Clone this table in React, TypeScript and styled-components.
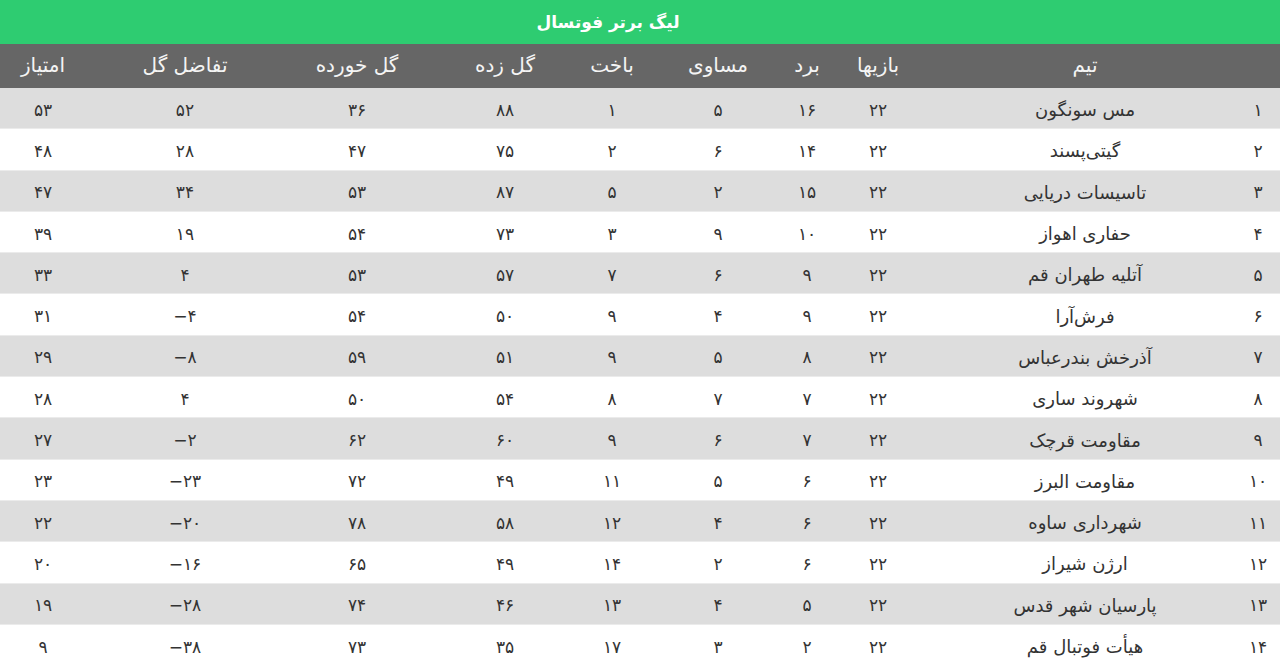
import React from 'react';
import styled, { createGlobalStyle } from 'styled-components';

type Team = {
    rank: number,
    name: string,
    played: number,
    won: number,
    drawn: number,
    lost: number,
    goalsFor: number,
    goalsAgainst: number,
    diff: number,
    points: number
}

const teams: Team[] = [
    { rank: 1, name: 'مس سونگون', played: 22, won: 16, drawn: 5, lost: 1, goalsFor: 88, goalsAgainst: 36, diff: 52, points: 53 },
    { rank: 2, name: 'گیتی‌پسند', played: 22, won: 14, drawn: 6, lost: 2, goalsFor: 75, goalsAgainst: 47, diff: 28, points: 48 },
    { rank: 3, name: 'تاسیسات دریایی', played: 22, won: 15, drawn: 2, lost: 5, goalsFor: 87, goalsAgainst: 53, diff: 34, points: 47 },
    { rank: 4, name: 'حفاری اهواز', played: 22, won: 10, drawn: 9, lost: 3, goalsFor: 73, goalsAgainst: 54, diff: 19, points: 39 },
    { rank: 5, name: 'آتلیه طهران قم', played: 22, won: 9, drawn: 6, lost: 7, goalsFor: 57, goalsAgainst: 53, diff: 4, points: 33 },
    { rank: 6, name: 'فرش‌آرا', played: 22, won: 9, drawn: 4, lost: 9, goalsFor: 50, goalsAgainst: 54, diff: -4, points: 31 },
    { rank: 7, name: 'آذرخش بندرعباس', played: 22, won: 8, drawn: 5, lost: 9, goalsFor: 51, goalsAgainst: 59, diff: -8, points: 29 },
    { rank: 8, name: 'شهروند ساری', played: 22, won: 7, drawn: 7, lost: 8, goalsFor: 54, goalsAgainst: 50, diff: 4, points: 28 },
    { rank: 9, name: 'مقاومت قرچک', played: 22, won: 7, drawn: 6, lost: 9, goalsFor: 60, goalsAgainst: 62, diff: -2, points: 27 },
    { rank: 10, name: 'مقاومت البرز', played: 22, won: 6, drawn: 5, lost: 11, goalsFor: 49, goalsAgainst: 72, diff: -23, points: 23 },
    { rank: 11, name: 'شهرداری ساوه', played: 22, won: 6, drawn: 4, lost: 12, goalsFor: 58, goalsAgainst: 78, diff: -20, points: 22 },
    { rank: 12, name: 'ارژن شیراز', played: 22, won: 6, drawn: 2, lost: 14, goalsFor: 49, goalsAgainst: 65, diff: -16, points: 20 },
    { rank: 13, name: 'پارسیان شهر قدس', played: 22, won: 5, drawn: 4, lost: 13, goalsFor: 46, goalsAgainst: 74, diff: -28, points: 19 },
    { rank: 14, name: 'هیأت فوتبال قم', played: 22, won: 2, drawn: 3, lost: 17, goalsFor: 35, goalsAgainst: 73, diff: -38, points: 9 }
];

const headings = ['', 'تیم', 'بازیها', 'برد', 'مساوی', 'باخت', 'گل زده', 'گل خورده', 'تفاضل گل', 'امتیاز'];

// column widths, right to left
const columns = '44px 302px 112px 30px 148px 64px 150px 146px 198px 86px';

const persianDigits = '۰۱۲۳۴۵۶۷۸۹';
const fa = (n: number) => {
    const s = String(Math.abs(n)).replace(/\d/g, d => persianDigits[Number(d)]);
    return n < 0 ? '\u2212' + s : s;
};

const GlobalStyle = createGlobalStyle`
    html, body {
        margin: 0;
        padding: 0;
        background: #ffffff;
    }
    body {
        font-family: "DejaVu Sans", "Noto Sans", sans-serif;
    }
`;

const App: React.FC = () => (
    <>
        <GlobalStyle />
        <Wrapper dir='rtl'>
            <Title>لیگ برتر فوتسال</Title>
            <HeadRow>
                {headings.map((h, i) => <HeadCell key={i}>{h}</HeadCell>)}
            </HeadRow>
            {teams.map(t => (
                <Row key={t.rank} $striped={t.rank % 2 === 1}>
                    <Cell>{fa(t.rank)}</Cell>
                    <Name>{t.name}</Name>
                    <Cell>{fa(t.played)}</Cell>
                    <Cell>{fa(t.won)}</Cell>
                    <Cell>{fa(t.drawn)}</Cell>
                    <Cell>{fa(t.lost)}</Cell>
                    <Cell>{fa(t.goalsFor)}</Cell>
                    <Cell>{fa(t.goalsAgainst)}</Cell>
                    <Diff dir='ltr'>{fa(t.diff)}</Diff>
                    <Cell>{fa(t.points)}</Cell>
                </Row>
            ))}
        </Wrapper>
    </>
);

const Wrapper = styled.div`
    width: 1280px;
    display: flex;
    flex-direction: column;
`;

const Title = styled.h1`
    margin: 0;
    height: 44px;
    background-color: #2ecc71;
    color: #ffffff;
    font-size: 17px;
    font-weight: 700;
    display: flex;
    align-items: center;
    justify-content: center;
    padding-right: 64px;
`;

const HeadRow = styled.div`
    display: grid;
    grid-template-columns: ${columns};
    height: 44px;
    background-color: #666666;
    color: #f4f4f4;
    font-size: 20px;
`;

const HeadCell = styled.div`
    display: flex;
    align-items: center;
    justify-content: center;
    white-space: nowrap;
    padding-bottom: 2px;
`;

const Row = styled.div<{ $striped: boolean }>`
    display: grid;
    grid-template-columns: ${columns};
    height: 41.3px;
    background-color: ${({ $striped }) => $striped ? '#dddddd' : '#ffffff'};
    border-bottom: 1px solid #ebebeb;
    box-sizing: border-box;
    color: #333333;
    font-size: 17px;
`;

const Cell = styled.div`
    display: flex;
    align-items: center;
    justify-content: center;
    white-space: nowrap;
    letter-spacing: 2px;
    padding-top: 3px;
`;

const Name = styled(Cell)`
    font-size: 18px;
    letter-spacing: 0;
`;

const Diff = styled(Cell)`
    word-spacing: 0;
    & {
        unicode-bidi: isolate;
    }
`;

export default App;
